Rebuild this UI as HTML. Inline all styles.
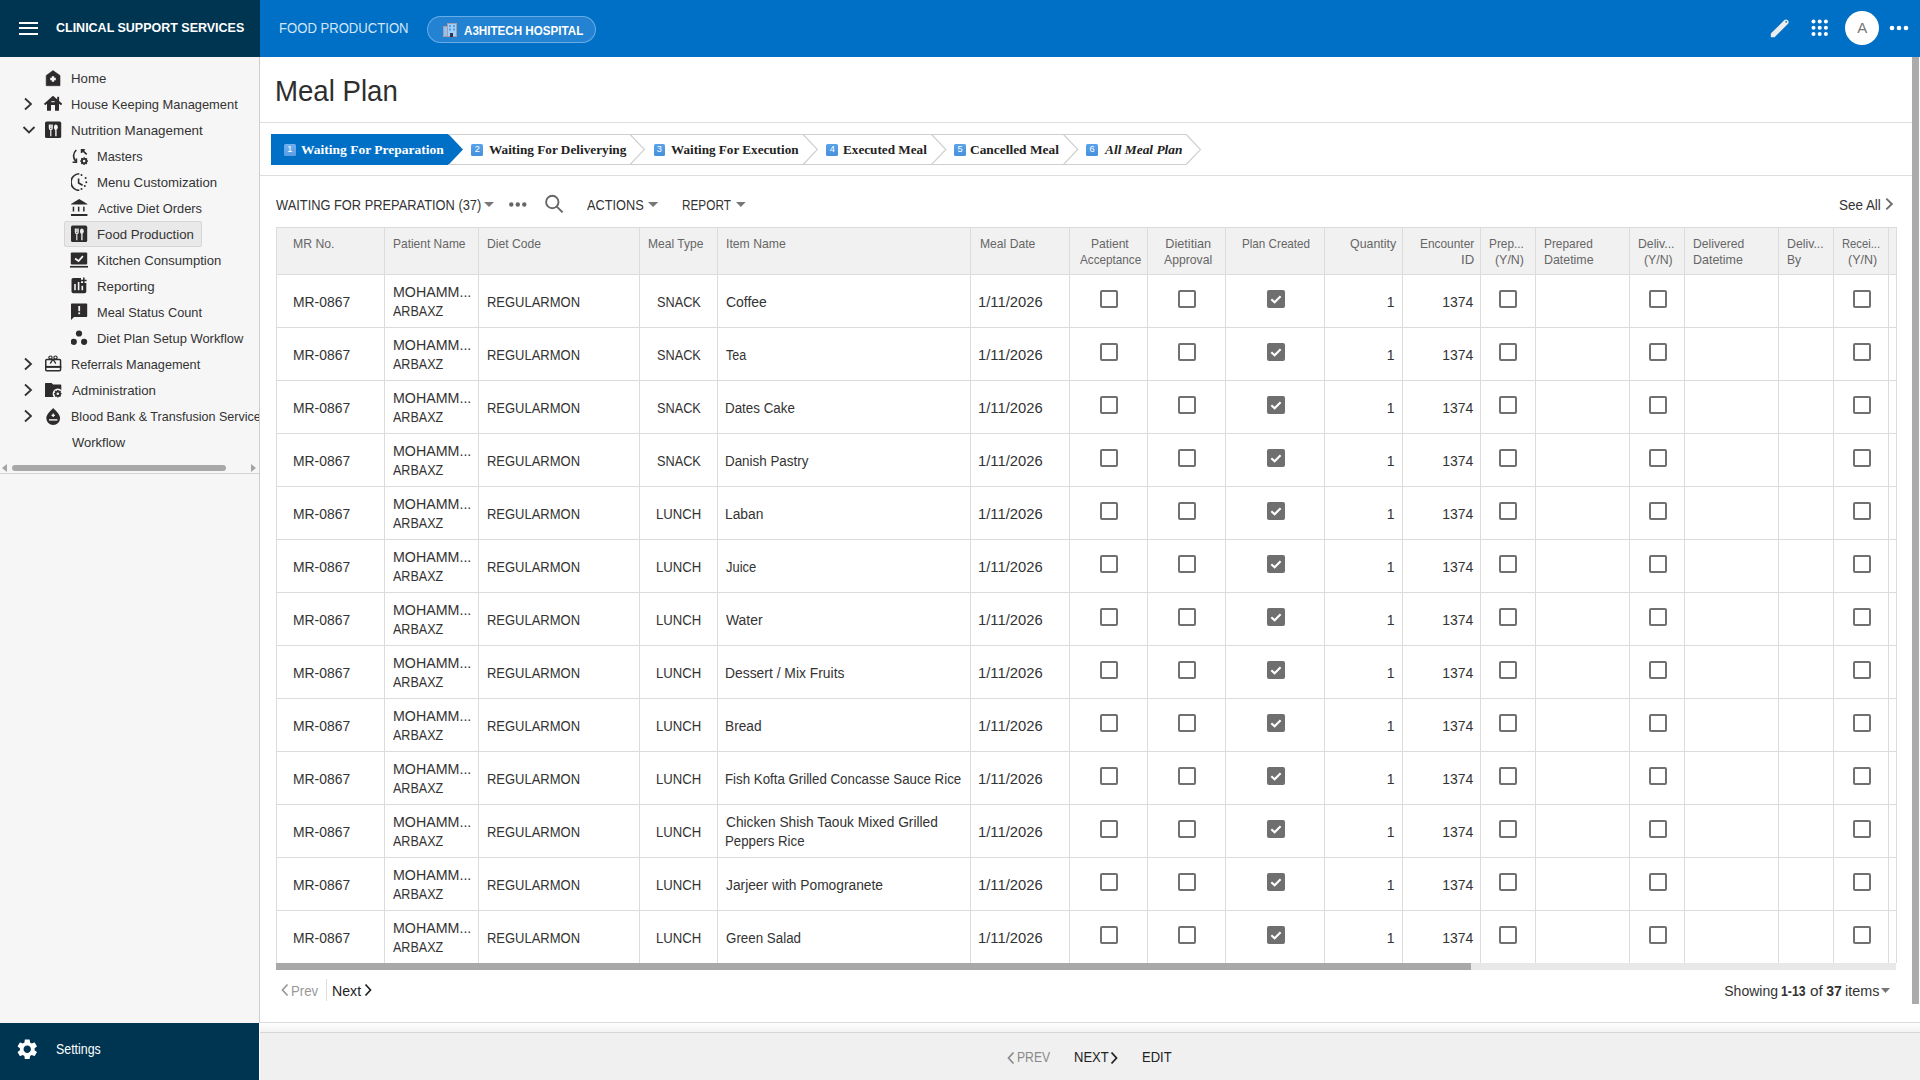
<!DOCTYPE html><html><head><meta charset="utf-8"><style>
*{margin:0;padding:0;box-sizing:border-box}
html,body{width:1920px;height:1080px;overflow:hidden;background:#fff;font-family:"Liberation Sans", sans-serif}
.t{position:absolute;white-space:nowrap}
.a{position:absolute}
</style></head><body>
<div class="a" style="left:0;top:0;width:260px;height:57px;background:#003552"></div><div class="a" style="left:260px;top:0;width:1660px;height:57px;background:#0070c6"></div><div class="a" style="left:19px;top:21.5px;width:19px;height:2px;background:#fff"></div><div class="a" style="left:19px;top:27px;width:19px;height:2px;background:#fff"></div><div class="a" style="left:19px;top:32.5px;width:19px;height:2px;background:#fff"></div><div class="t" style="left:55.80px;top:21.16px;font-size:13.4px;line-height:13.4px;color:#fff;font-weight:bold;font-style:normal;font-family:'Liberation Sans', sans-serif;transform:scaleX(0.9323);transform-origin:0 0;">CLINICAL SUPPORT SERVICES</div><div class="t" style="left:278.65px;top:20.78px;font-size:14.2px;line-height:14.2px;color:#d4e5f6;font-weight:normal;font-style:normal;font-family:'Liberation Sans', sans-serif;transform:scaleX(0.9233);transform-origin:0 0;">FOOD PRODUCTION</div><div class="a" style="left:427px;top:16px;width:169px;height:27px;border-radius:14px;background:#2383d2;border:1px solid rgba(160,205,245,0.55)"></div><svg class="a" style="left:443px;top:23px" width="14" height="14" viewBox="0 0 14 14">
<rect x="0" y="3" width="5" height="11" fill="#a99aa5"/><rect x="1" y="4" width="3" height="9" fill="#8ec2f2"/>
<rect x="4" y="0" width="10" height="14" fill="#a99aa5"/><rect x="5" y="1" width="8" height="12" fill="#9fd0fa"/>
<rect x="6" y="2" width="2" height="2" fill="#5a9ee0"/><rect x="10" y="2" width="2" height="2" fill="#5a9ee0"/>
<rect x="6" y="5.5" width="2" height="2" fill="#5a9ee0"/><rect x="10" y="5.5" width="2" height="2" fill="#5a9ee0"/>
<rect x="7" y="10" width="3" height="4" fill="#3a3045"/></svg><div class="t" style="left:463.61px;top:25.13px;font-size:12.6px;line-height:12.6px;color:#fff;font-weight:bold;font-style:normal;font-family:'Liberation Sans', sans-serif;transform:scaleX(0.9231);transform-origin:0 0;">A3HITECH HOSPITAL</div><svg class="a" style="left:1770px;top:18px" width="20" height="20" viewBox="0 0 20 20">
<path d="M0.8 19.2 L0.8 15.6 L14.4 2.0 A2.65 2.65 0 0 1 18.1 5.7 L4.6 19.2 Z" fill="#ececec"/>
<circle cx="16.2" cy="3.8" r="0.9" fill="#0070c6"/></svg><svg class="a" style="left:1811px;top:19px" width="20" height="20" viewBox="0 0 20 20"><circle cx="2.5" cy="2.5" r="2" fill="#fff"/><circle cx="2.5" cy="8.7" r="2" fill="#fff"/><circle cx="2.5" cy="14.9" r="2" fill="#fff"/><circle cx="8.7" cy="2.5" r="2" fill="#fff"/><circle cx="8.7" cy="8.7" r="2" fill="#fff"/><circle cx="8.7" cy="14.9" r="2" fill="#fff"/><circle cx="14.9" cy="2.5" r="2" fill="#fff"/><circle cx="14.9" cy="8.7" r="2" fill="#fff"/><circle cx="14.9" cy="14.9" r="2" fill="#fff"/></svg><div class="a" style="left:1845px;top:11px;width:34px;height:34px;border-radius:50%;background:#fff"></div><div class="t" style="left:1857.21px;top:20.00px;font-size:15px;line-height:15px;color:#777;font-weight:normal;font-style:normal;font-family:'Liberation Sans', sans-serif;">A</div><svg class="a" style="left:1889px;top:24px" width="20" height="8" viewBox="0 0 20 8"><circle cx="3" cy="4" r="2.3" fill="#fff"/><circle cx="10" cy="4" r="2.3" fill="#fff"/><circle cx="17" cy="4" r="2.3" fill="#fff"/></svg><div class="a" style="left:0;top:57px;width:259px;height:966px;background:#f6f6f6;overflow:hidden"><div class="a" style="left:64px;top:164px;width:138px;height:26px;background:#e9e9e9;border:1px solid #d6d6d6;border-radius:2px"></div><div class="t" style="left:70.84px;top:14.97px;font-size:13.5px;line-height:13.5px;color:#333;font-weight:normal;font-style:normal;font-family:'Liberation Sans', sans-serif;transform:scaleX(0.9799);transform-origin:0 0;">Home</div><div class="t" style="left:70.87px;top:40.97px;font-size:13.5px;line-height:13.5px;color:#333;font-weight:normal;font-style:normal;font-family:'Liberation Sans', sans-serif;transform:scaleX(0.9535);transform-origin:0 0;">House Keeping Management</div><svg class="a" style="left:22.3px;top:40px" width="12" height="14" viewBox="0 0 12 14"><path d="M3 1.5 L9 7 L3 12.5" stroke="#333" stroke-width="1.8" fill="none"/></svg><div class="t" style="left:70.83px;top:66.97px;font-size:13.5px;line-height:13.5px;color:#333;font-weight:normal;font-style:normal;font-family:'Liberation Sans', sans-serif;transform:scaleX(0.9922);transform-origin:0 0;">Nutrition Management</div><svg class="a" style="left:22px;top:67px" width="14" height="12" viewBox="0 0 14 12"><path d="M1.5 3 L7 8.5 L12.5 3" stroke="#333" stroke-width="1.8" fill="none"/></svg><div class="t" style="left:96.57px;top:92.97px;font-size:13.5px;line-height:13.5px;color:#333;font-weight:normal;font-style:normal;font-family:'Liberation Sans', sans-serif;transform:scaleX(0.9496);transform-origin:0 0;">Masters</div><div class="t" style="left:96.55px;top:118.97px;font-size:13.5px;line-height:13.5px;color:#333;font-weight:normal;font-style:normal;font-family:'Liberation Sans', sans-serif;transform:scaleX(0.9761);transform-origin:0 0;">Menu Customization</div><div class="t" style="left:97.60px;top:144.97px;font-size:13.5px;line-height:13.5px;color:#333;font-weight:normal;font-style:normal;font-family:'Liberation Sans', sans-serif;transform:scaleX(0.9498);transform-origin:0 0;">Active Diet Orders</div><div class="t" style="left:96.54px;top:170.97px;font-size:13.5px;line-height:13.5px;color:#333;font-weight:normal;font-style:normal;font-family:'Liberation Sans', sans-serif;transform:scaleX(0.9777);transform-origin:0 0;">Food Production</div><div class="t" style="left:96.55px;top:196.97px;font-size:13.5px;line-height:13.5px;color:#333;font-weight:normal;font-style:normal;font-family:'Liberation Sans', sans-serif;transform:scaleX(0.9687);transform-origin:0 0;">Kitchen Consumption</div><div class="t" style="left:96.54px;top:222.97px;font-size:13.5px;line-height:13.5px;color:#333;font-weight:normal;font-style:normal;font-family:'Liberation Sans', sans-serif;transform:scaleX(0.9838);transform-origin:0 0;">Reporting</div><div class="t" style="left:96.58px;top:248.97px;font-size:13.5px;line-height:13.5px;color:#333;font-weight:normal;font-style:normal;font-family:'Liberation Sans', sans-serif;transform:scaleX(0.9455);transform-origin:0 0;">Meal Status Count</div><div class="t" style="left:96.57px;top:274.97px;font-size:13.5px;line-height:13.5px;color:#333;font-weight:normal;font-style:normal;font-family:'Liberation Sans', sans-serif;transform:scaleX(0.9578);transform-origin:0 0;">Diet Plan Setup Workflow</div><div class="t" style="left:70.88px;top:300.97px;font-size:13.5px;line-height:13.5px;color:#333;font-weight:normal;font-style:normal;font-family:'Liberation Sans', sans-serif;transform:scaleX(0.9409);transform-origin:0 0;">Referrals Management</div><svg class="a" style="left:22.3px;top:300px" width="12" height="14" viewBox="0 0 12 14"><path d="M3 1.5 L9 7 L3 12.5" stroke="#333" stroke-width="1.8" fill="none"/></svg><div class="t" style="left:71.90px;top:326.97px;font-size:13.5px;line-height:13.5px;color:#333;font-weight:normal;font-style:normal;font-family:'Liberation Sans', sans-serif;transform:scaleX(0.9817);transform-origin:0 0;">Administration</div><svg class="a" style="left:22.3px;top:326px" width="12" height="14" viewBox="0 0 12 14"><path d="M3 1.5 L9 7 L3 12.5" stroke="#333" stroke-width="1.8" fill="none"/></svg><div class="t" style="left:70.82px;top:352.97px;font-size:13.5px;line-height:13.5px;color:#333;font-weight:normal;font-style:normal;font-family:'Liberation Sans', sans-serif;transform:scaleX(0.93);transform-origin:0 0;">Blood Bank &amp; Transfusion Services</div><svg class="a" style="left:22.3px;top:352px" width="12" height="14" viewBox="0 0 12 14"><path d="M3 1.5 L9 7 L3 12.5" stroke="#333" stroke-width="1.8" fill="none"/></svg><div class="t" style="left:71.84px;top:378.97px;font-size:13.5px;line-height:13.5px;color:#333;font-weight:normal;font-style:normal;font-family:'Liberation Sans', sans-serif;transform:scaleX(0.9617);transform-origin:0 0;">Workflow</div><svg class="a" style="left:45px;top:12px" width="18" height="18" viewBox="0 0 18 18"><path d="M1.2 6.5 L8 1.6 L15 6.5 L15 16.7 L1.2 16.7 Z" fill="#2d2b2c" stroke="#2d2b2c" stroke-width="0.6" stroke-linejoin="round"/><path d="M8 7.2 V12.8 M5.2 10 H10.8" stroke="#f6f6f6" stroke-width="2.4"/></svg><svg class="a" style="left:44px;top:38px" width="18" height="18" viewBox="0 0 18 18"><path d="M0.6 9.6 L9 2 L17.6 9.6" stroke="#2d2b2c" stroke-width="2" fill="none"/><path d="M3 8 L9 2.8 L15 8 V15.7 H11 V10 H7 V15.7 H3 Z" fill="#2d2b2c"/><rect x="13.2" y="1.8" width="1.9" height="4.6" fill="#2d2b2c"/><rect x="7.3" y="6.2" width="3.3" height="1" fill="#f6f6f6"/></svg><svg class="a" style="left:45px;top:64px" width="18" height="18" viewBox="0 0 18 18"><rect x="0" y="0.6" width="16.2" height="16.5" rx="1.6" fill="#2d2b2c"/><path d="M4.4 3.6 V7 Q4.4 8.6 5.8 8.6 Q7.2 8.6 7.2 7 V3.6 M5.8 3.6 V7.2 M5.8 8.4 V15.2" stroke="#f6f6f6" stroke-width="1.2" fill="none"/><ellipse cx="10.9" cy="6.3" rx="1.9" ry="2.8" fill="#f6f6f6"/><path d="M10.9 8.5 V15.2" stroke="#f6f6f6" stroke-width="1.4"/></svg><svg class="a" style="left:71px;top:90px" width="18" height="18" viewBox="0 0 18 18"><path d="M5.3 3 Q0.2 7.8 4.6 14.4" stroke="#2d2b2c" stroke-width="1.6" fill="none"/><path d="M1.6 15.2 H5.4 V11.4" stroke="#2d2b2c" stroke-width="1.6" fill="none"/><path d="M10.6 2.7 L15.7 7.4 M10.6 6 V2.7 H13.9" stroke="#2d2b2c" stroke-width="1.6" fill="none"/><polygon points="13.10,10.40 14.12,11.64 15.72,11.48 15.56,13.08 16.80,14.10 15.56,15.12 15.72,16.72 14.12,16.56 13.10,17.80 12.08,16.56 10.48,16.72 10.64,15.12 9.40,14.10 10.64,13.08 10.48,11.48 12.08,11.64" fill="#2d2b2c" stroke="#2d2b2c" stroke-width="1" stroke-linejoin="round"/><circle cx="13.1" cy="14.1" r="1.3" fill="#f6f6f6"/></svg><svg class="a" style="left:71px;top:116px" width="18" height="18" viewBox="0 0 18 18"><path d="M8.3 0.8 A8.3 8.3 0 0 0 8.3 17.4" stroke="#2d2b2c" stroke-width="1.6" fill="none"/><path d="M7.6 5.4 V10 L11.6 12.2" stroke="#2d2b2c" stroke-width="1.6" fill="none"/><circle cx="10.5" cy="1.9" r="1" fill="#2d2b2c"/><circle cx="14.6" cy="5.1" r="1" fill="#2d2b2c"/><circle cx="15.3" cy="9.2" r="1" fill="#2d2b2c"/><circle cx="13.8" cy="12.9" r="1" fill="#2d2b2c"/><circle cx="10.5" cy="15.9" r="1" fill="#2d2b2c"/></svg><svg class="a" style="left:71px;top:142px" width="18" height="18" viewBox="0 0 18 18"><path d="M0 5 L8.2 0 L16.4 5 V5.6 H0 Z" fill="#2d2b2c"/><rect x="1.7" y="7.7" width="1.5" height="4.8" fill="#2d2b2c"/><rect x="6.9" y="7.7" width="1.5" height="4.8" fill="#2d2b2c"/><rect x="12.1" y="7.7" width="1.5" height="4.8" fill="#2d2b2c"/><rect x="0" y="15" width="16.4" height="2" fill="#2d2b2c"/></svg><svg class="a" style="left:71px;top:168px" width="18" height="18" viewBox="0 0 18 18"><rect x="0" y="0.6" width="16.2" height="16.5" rx="1.6" fill="#2d2b2c"/><path d="M4.4 3.6 V7 Q4.4 8.6 5.8 8.6 Q7.2 8.6 7.2 7 V3.6 M5.8 3.6 V7.2 M5.8 8.4 V15.2" stroke="#e9e9e9" stroke-width="1.2" fill="none"/><ellipse cx="10.9" cy="6.3" rx="1.9" ry="2.8" fill="#e9e9e9"/><path d="M10.9 8.5 V15.2" stroke="#e9e9e9" stroke-width="1.4"/></svg><svg class="a" style="left:70px;top:194px" width="18" height="18" viewBox="0 0 18 18"><rect x="0.8" y="1.6" width="16.4" height="11.9" rx="1" fill="#2d2b2c"/><path d="M5.1 7.6 L8.5 10 L12.9 5.2" stroke="#f6f6f6" stroke-width="1.8" fill="none"/><rect x="0" y="14.9" width="18" height="1.7" fill="#2d2b2c"/></svg><svg class="a" style="left:71px;top:220px" width="18" height="18" viewBox="0 0 18 18"><rect x="0.5" y="1" width="14.8" height="15.2" rx="1.8" fill="#2d2b2c"/><rect x="10" y="0" width="8" height="6" fill="#f6f6f6"/><path d="M12.8 0.6 V6.2 M10 3.4 H15.6" stroke="#2d2b2c" stroke-width="1.5"/><rect x="3.2" y="7" width="1.6" height="6.2" fill="#f6f6f6"/><rect x="6.8" y="5" width="1.6" height="8.2" fill="#f6f6f6"/><rect x="10.5" y="8.8" width="1.6" height="4.4" fill="#f6f6f6"/></svg><svg class="a" style="left:71px;top:246px" width="18" height="18" viewBox="0 0 18 18"><path d="M0 1.2 Q0 0.4 0.8 0.4 H15.4 Q16.2 0.4 16.2 1.2 V13.2 Q16.2 14 15.4 14 H3 L0 16.9 Z" fill="#2d2b2c"/><rect x="7.3" y="3" width="1.8" height="5.2" fill="#f6f6f6"/><rect x="7.3" y="9.4" width="1.8" height="1.8" fill="#f6f6f6"/></svg><svg class="a" style="left:71px;top:272px" width="18" height="18" viewBox="0 0 18 18"><circle cx="8" cy="4.5" r="3.1" fill="#2d2b2c"/><circle cx="2.8" cy="12.8" r="3.1" fill="#2d2b2c"/><circle cx="13.1" cy="12.8" r="3.1" fill="#2d2b2c"/></svg><svg class="a" style="left:45px;top:298px" width="18" height="18" viewBox="0 0 18 18"><rect x="0.75" y="4.6" width="14.8" height="11.2" rx="1" fill="none" stroke="#2d2b2c" stroke-width="1.5"/><rect x="0" y="10.9" width="16.3" height="2" fill="#2d2b2c"/><circle cx="5.5" cy="2.6" r="1.6" fill="none" stroke="#2d2b2c" stroke-width="1.2"/><circle cx="10.5" cy="2.6" r="1.6" fill="none" stroke="#2d2b2c" stroke-width="1.2"/><path d="M8 4.2 L5.2 8.6 M8 4.2 L10.8 8.6" stroke="#2d2b2c" stroke-width="1.3"/></svg><svg class="a" style="left:45px;top:324px" width="18" height="18" viewBox="0 0 18 18"><path d="M0 2.6 Q0 2 0.6 2 H6.6 L8.1 3.5 H15.6 Q16.3 3.5 16.3 4.2 V15.9 H0 Z" fill="#2d2b2c"/><circle cx="12.8" cy="12.7" r="5.2" fill="#f6f6f6"/><polygon points="12.80,9.10 13.79,10.31 15.35,10.15 15.19,11.71 16.40,12.70 15.19,13.69 15.35,15.25 13.79,15.09 12.80,16.30 11.81,15.09 10.25,15.25 10.41,13.69 9.20,12.70 10.41,11.71 10.25,10.15 11.81,10.31" fill="#2d2b2c" stroke="#2d2b2c" stroke-width="1" stroke-linejoin="round"/><circle cx="12.8" cy="12.7" r="1.3" fill="#f6f6f6"/></svg><svg class="a" style="left:45px;top:350px" width="18" height="18" viewBox="0 0 18 18"><path d="M8.2 1 C5.5 4 1.3 7.5 1.3 11 A6.9 6.9 0 0 0 15.1 11 C15.1 7.5 10.9 4 8.2 1 Z" fill="#2d2b2c"/><path d="M8.2 6.6 V10 M6.5 8.3 H9.9" stroke="#f6f6f6" stroke-width="1.3"/><rect x="4" y="12.2" width="8.4" height="1.4" fill="#f6f6f6"/></svg><svg class="a" style="left:2px;top:407px" width="6" height="8" viewBox="0 0 6 8"><path d="M5 0 L0 4 L5 8 Z" fill="#a3a3a3"/></svg><div class="a" style="left:12px;top:408px;width:214px;height:6px;border-radius:3px;background:#a8a8a8"></div><svg class="a" style="left:251px;top:407px" width="6" height="8" viewBox="0 0 6 8"><path d="M0 0 L5 4 L0 8 Z" fill="#a3a3a3"/></svg><div class="a" style="left:0;top:416px;width:259px;height:1px;background:#d4d4d4"></div></div><div class="a" style="left:259px;top:57px;width:1px;height:966px;background:#cdcdcd"></div><div class="a" style="left:0;top:1023px;width:259px;height:57px;background:#003552"></div><svg class="a" style="left:17.3px;top:1038.8px" width="20.5" height="20.5" viewBox="2 2 20 20"><path fill="#fff" d="M19.14 12.94c.04-.3.06-.61.06-.94 0-.32-.02-.64-.07-.94l2.03-1.58a.49.49 0 0 0 .12-.61l-1.92-3.32a.488.488 0 0 0-.59-.22l-2.39.96c-.5-.38-1.030-.7-1.62-.94l-.36-2.54a.484.484 0 0 0-.48-.41h-3.84c-.24 0-.43.17-.47.41l-.36 2.540c-.59.24-1.13.57-1.62.94l-2.39-.96c-.22-.08-.47 0-.59.22L2.74 8.87c-.12.21-.08.47.12.61l2.03 1.58c-.05.3-.09.63-.09.94s.02.64.07.94l-2.03 1.58a.49.49 0 0 0-.12.61l1.92 3.32c.12.22.37.29.59.22l2.39-.96c.5.38 1.03.7 1.62.94l.36 2.54c.05.24.24.41.48.41h3.840c.24 0 .44-.17.47-.41l.36-2.54c.59-.24 1.13-.56 1.62-.94l2.39.96c.22.08.47 0 .59-.22l1.92-3.32c.12-.22.07-.47-.12-.61l-2.01-1.58zM12 15.6c-1.98 0-3.6-1.62-3.6-3.6s1.62-3.6 3.6-3.6 3.6 1.62 3.6 3.6-1.62 3.6-3.6 3.6z"/></svg><div class="t" style="left:55.69px;top:1042.82px;font-size:13.8px;line-height:13.8px;color:#fff;font-weight:normal;font-style:normal;font-family:'Liberation Sans', sans-serif;transform:scaleX(0.8968);transform-origin:0 0;">Settings</div><div class="t" style="left:275.29px;top:76.54px;font-size:28.6px;line-height:28.6px;color:#2e2e2e;font-weight:normal;font-style:normal;font-family:'Liberation Sans', sans-serif;transform:scaleX(0.9660);transform-origin:0 0;">Meal Plan</div><div class="a" style="left:260px;top:122px;width:1652px;height:1px;background:#dedede"></div><svg class="a" style="left:260px;top:134px" width="960" height="31" viewBox="260 134 960 31"><path d="M271 134 H448.3 L463 149.5 L448.3 165 H271 Z" fill="#0070c6"/><path d="M448.3 134.5 H1186.2 M448.3 164.5 H1186.2" stroke="#cfcfcf" stroke-width="1"/><path d="M630.1 134.5 L644.4 149.5 L630.1 164.5" stroke="#cfcfcf" stroke-width="1.1" fill="none"/><path d="M803.1 134.5 L817.4 149.5 L803.1 164.5" stroke="#cfcfcf" stroke-width="1.1" fill="none"/><path d="M931.6 134.5 L945.9 149.5 L931.6 164.5" stroke="#cfcfcf" stroke-width="1.1" fill="none"/><path d="M1063.5 134.5 L1077.8 149.5 L1063.5 164.5" stroke="#cfcfcf" stroke-width="1.1" fill="none"/><path d="M1186.2 134.5 L1200.5 149.5 L1186.2 164.5" stroke="#cfcfcf" stroke-width="1.1" fill="none"/></svg><div class="a" style="left:284.05px;top:144px;width:11.7px;height:11.6px;border-radius:1.5px;background:linear-gradient(#6fb0ee,#5a9de2)"></div><div class="t" style="left:287.26px;top:145.21px;font-size:9.2px;line-height:9.2px;color:#fff;font-weight:normal;font-style:normal;font-family:'Liberation Sans', sans-serif;">1</div><div class="t" style="left:301.05px;top:143.90px;font-size:12.3px;line-height:12.3px;color:#fff;font-weight:bold;font-style:normal;font-family:'Liberation Serif', serif;transform:scaleX(1.0987);transform-origin:0 0;">Waiting For Preparation</div><div class="a" style="left:471.3px;top:144px;width:11.7px;height:11.6px;border-radius:1.5px;background:linear-gradient(#5aa3ea,#4690dc)"></div><div class="t" style="left:474.65px;top:145.21px;font-size:9.2px;line-height:9.2px;color:#fff;font-weight:normal;font-style:normal;font-family:'Liberation Sans', sans-serif;">2</div><div class="t" style="left:489.05px;top:143.90px;font-size:12.3px;line-height:12.3px;color:#222;font-weight:bold;font-style:normal;font-family:'Liberation Serif', serif;transform:scaleX(1.0767);transform-origin:0 0;">Waiting For Deliverying</div><div class="a" style="left:653.5px;top:144px;width:11.7px;height:11.6px;border-radius:1.5px;background:linear-gradient(#5aa3ea,#4690dc)"></div><div class="t" style="left:656.85px;top:145.21px;font-size:9.2px;line-height:9.2px;color:#fff;font-weight:normal;font-style:normal;font-family:'Liberation Sans', sans-serif;">3</div><div class="t" style="left:671.40px;top:143.90px;font-size:12.3px;line-height:12.3px;color:#222;font-weight:bold;font-style:normal;font-family:'Liberation Serif', serif;transform:scaleX(1.0685);transform-origin:0 0;">Waiting For Execution</div><div class="a" style="left:826.3px;top:144px;width:11.7px;height:11.6px;border-radius:1.5px;background:linear-gradient(#5aa3ea,#4690dc)"></div><div class="t" style="left:829.69px;top:145.21px;font-size:9.2px;line-height:9.2px;color:#fff;font-weight:normal;font-style:normal;font-family:'Liberation Sans', sans-serif;">4</div><div class="t" style="left:842.80px;top:143.90px;font-size:12.3px;line-height:12.3px;color:#222;font-weight:bold;font-style:normal;font-family:'Liberation Serif', serif;transform:scaleX(1.0720);transform-origin:0 0;">Executed Meal</div><div class="a" style="left:954.0999999999999px;top:144px;width:11.7px;height:11.6px;border-radius:1.5px;background:linear-gradient(#5aa3ea,#4690dc)"></div><div class="t" style="left:957.45px;top:145.21px;font-size:9.2px;line-height:9.2px;color:#fff;font-weight:normal;font-style:normal;font-family:'Liberation Sans', sans-serif;">5</div><div class="t" style="left:970.23px;top:143.90px;font-size:12.3px;line-height:12.3px;color:#222;font-weight:bold;font-style:normal;font-family:'Liberation Serif', serif;transform:scaleX(1.0890);transform-origin:0 0;">Cancelled Meal</div><div class="a" style="left:1086.3px;top:144px;width:11.7px;height:11.6px;border-radius:1.5px;background:linear-gradient(#5aa3ea,#4690dc)"></div><div class="t" style="left:1089.60px;top:145.21px;font-size:9.2px;line-height:9.2px;color:#fff;font-weight:normal;font-style:normal;font-family:'Liberation Sans', sans-serif;">6</div><div class="t" style="left:1104.77px;top:143.90px;font-size:12.3px;line-height:12.3px;color:#222;font-weight:bold;font-style:italic;font-family:'Liberation Serif', serif;transform:scaleX(1.0910);transform-origin:0 0;">All Meal Plan</div><div class="a" style="left:260px;top:175px;width:1652px;height:1px;background:#dedede"></div><div class="t" style="left:275.54px;top:197.75px;font-size:14px;line-height:14px;color:#333;font-weight:normal;font-style:normal;font-family:'Liberation Sans', sans-serif;transform:scaleX(0.9174);transform-origin:0 0;">WAITING FOR PREPARATION (37)</div><svg class="a" style="left:484.4px;top:202px" width="10.0" height="5" viewBox="0 0 10 5" preserveAspectRatio="none"><path d="M0 0 H10 L5 5 Z" fill="#777"/></svg><svg class="a" style="left:509px;top:202px" width="18" height="5" viewBox="0 0 18 5"><circle cx="2.3" cy="2.5" r="2.2" fill="#666"/><circle cx="8.8" cy="2.5" r="2.2" fill="#666"/><circle cx="15.3" cy="2.5" r="2.2" fill="#666"/></svg><svg class="a" style="left:544px;top:194px" width="20" height="20" viewBox="0 0 20 20"><circle cx="8.3" cy="8" r="6.2" fill="none" stroke="#666" stroke-width="1.9"/><path d="M12.8 12.6 L18.6 18.4" stroke="#666" stroke-width="2"/></svg><div class="t" style="left:587.20px;top:197.95px;font-size:14px;line-height:14px;color:#333;font-weight:normal;font-style:normal;font-family:'Liberation Sans', sans-serif;transform:scaleX(0.9107);transform-origin:0 0;">ACTIONS</div><svg class="a" style="left:647.7px;top:202px" width="10.199999999999932" height="5" viewBox="0 0 10 5" preserveAspectRatio="none"><path d="M0 0 H10 L5 5 Z" fill="#777"/></svg><div class="t" style="left:682.46px;top:197.95px;font-size:14px;line-height:14px;color:#333;font-weight:normal;font-style:normal;font-family:'Liberation Sans', sans-serif;transform:scaleX(0.8413);transform-origin:0 0;">REPORT</div><svg class="a" style="left:736px;top:202px" width="9.700000000000045" height="5" viewBox="0 0 10 5" preserveAspectRatio="none"><path d="M0 0 H10 L5 5 Z" fill="#777"/></svg><div class="t" style="left:1839.10px;top:197.55px;font-size:14px;line-height:14px;color:#333;font-weight:normal;font-style:normal;font-family:'Liberation Sans', sans-serif;transform:scaleX(0.9595);transform-origin:0 0;">See All</div><svg class="a" style="left:1883.5px;top:197px" width="10" height="14" viewBox="0 0 10 14"><path d="M2.3 1.6 L7.8 7 L2.3 12.4" stroke="#707070" stroke-width="2" fill="none"/></svg><div class="a" style="left:276px;top:227px;width:1620px;height:47px;background:#f1f1f1"></div><div class="a" style="left:276px;top:227px;width:1620px;height:1px;background:#dcdcdc"></div><div class="a" style="left:276px;top:274px;width:1620px;height:1px;background:#dcdcdc"></div><div class="a" style="left:276px;top:327px;width:1620px;height:1px;background:#dcdcdc"></div><div class="a" style="left:276px;top:380px;width:1620px;height:1px;background:#dcdcdc"></div><div class="a" style="left:276px;top:433px;width:1620px;height:1px;background:#dcdcdc"></div><div class="a" style="left:276px;top:486px;width:1620px;height:1px;background:#dcdcdc"></div><div class="a" style="left:276px;top:539px;width:1620px;height:1px;background:#dcdcdc"></div><div class="a" style="left:276px;top:592px;width:1620px;height:1px;background:#dcdcdc"></div><div class="a" style="left:276px;top:645px;width:1620px;height:1px;background:#dcdcdc"></div><div class="a" style="left:276px;top:698px;width:1620px;height:1px;background:#dcdcdc"></div><div class="a" style="left:276px;top:751px;width:1620px;height:1px;background:#dcdcdc"></div><div class="a" style="left:276px;top:804px;width:1620px;height:1px;background:#dcdcdc"></div><div class="a" style="left:276px;top:857px;width:1620px;height:1px;background:#dcdcdc"></div><div class="a" style="left:276px;top:910px;width:1620px;height:1px;background:#dcdcdc"></div><div class="a" style="left:276px;top:227px;width:1px;height:736px;background:#dcdcdc"></div><div class="a" style="left:384px;top:227px;width:1px;height:736px;background:#dcdcdc"></div><div class="a" style="left:478px;top:227px;width:1px;height:736px;background:#dcdcdc"></div><div class="a" style="left:639px;top:227px;width:1px;height:736px;background:#dcdcdc"></div><div class="a" style="left:717px;top:227px;width:1px;height:736px;background:#dcdcdc"></div><div class="a" style="left:970px;top:227px;width:1px;height:736px;background:#dcdcdc"></div><div class="a" style="left:1069px;top:227px;width:1px;height:736px;background:#dcdcdc"></div><div class="a" style="left:1147px;top:227px;width:1px;height:736px;background:#dcdcdc"></div><div class="a" style="left:1225px;top:227px;width:1px;height:736px;background:#dcdcdc"></div><div class="a" style="left:1324px;top:227px;width:1px;height:736px;background:#dcdcdc"></div><div class="a" style="left:1402px;top:227px;width:1px;height:736px;background:#dcdcdc"></div><div class="a" style="left:1480px;top:227px;width:1px;height:736px;background:#dcdcdc"></div><div class="a" style="left:1535px;top:227px;width:1px;height:736px;background:#dcdcdc"></div><div class="a" style="left:1629px;top:227px;width:1px;height:736px;background:#dcdcdc"></div><div class="a" style="left:1684px;top:227px;width:1px;height:736px;background:#dcdcdc"></div><div class="a" style="left:1778px;top:227px;width:1px;height:736px;background:#dcdcdc"></div><div class="a" style="left:1833px;top:227px;width:1px;height:736px;background:#dcdcdc"></div><div class="a" style="left:1888px;top:227px;width:1px;height:736px;background:#dcdcdc"></div><div class="a" style="left:1896px;top:227px;width:1px;height:736px;background:#dcdcdc"></div><div class="t" style="left:293.22px;top:238.45px;font-size:12.7px;line-height:12.7px;color:#666;font-weight:normal;font-style:normal;font-family:'Liberation Sans', sans-serif;transform:scaleX(0.9625);transform-origin:0 0;">MR No.</div><div class="t" style="left:393.24px;top:238.45px;font-size:12.7px;line-height:12.7px;color:#666;font-weight:normal;font-style:normal;font-family:'Liberation Sans', sans-serif;transform:scaleX(0.9433);transform-origin:0 0;">Patient Name</div><div class="t" style="left:486.93px;top:238.45px;font-size:12.7px;line-height:12.7px;color:#666;font-weight:normal;font-style:normal;font-family:'Liberation Sans', sans-serif;transform:scaleX(0.9569);transform-origin:0 0;">Diet Code</div><div class="t" style="left:648.14px;top:238.45px;font-size:12.7px;line-height:12.7px;color:#666;font-weight:normal;font-style:normal;font-family:'Liberation Sans', sans-serif;transform:scaleX(0.9495);transform-origin:0 0;">Meal Type</div><div class="t" style="left:726.10px;top:238.45px;font-size:12.7px;line-height:12.7px;color:#666;font-weight:normal;font-style:normal;font-family:'Liberation Sans', sans-serif;transform:scaleX(0.9621);transform-origin:0 0;">Item Name</div><div class="t" style="left:979.73px;top:238.45px;font-size:12.7px;line-height:12.7px;color:#666;font-weight:normal;font-style:normal;font-family:'Liberation Sans', sans-serif;transform:scaleX(0.9563);transform-origin:0 0;">Meal Date</div><div class="t" style="left:1090.83px;top:238.45px;font-size:12.7px;line-height:12.7px;color:#666;font-weight:normal;font-style:normal;font-family:'Liberation Sans', sans-serif;transform:scaleX(0.9553);transform-origin:0 0;">Patient</div><div class="t" style="left:1079.70px;top:254.25px;font-size:12.7px;line-height:12.7px;color:#666;font-weight:normal;font-style:normal;font-family:'Liberation Sans', sans-serif;transform:scaleX(0.9227);transform-origin:0 0;">Acceptance</div><div class="t" style="left:1165.28px;top:238.45px;font-size:12.7px;line-height:12.7px;color:#666;font-weight:normal;font-style:normal;font-family:'Liberation Sans', sans-serif;">Dietitian</div><div class="t" style="left:1164.00px;top:254.25px;font-size:12.7px;line-height:12.7px;color:#666;font-weight:normal;font-style:normal;font-family:'Liberation Sans', sans-serif;transform:scaleX(0.9619);transform-origin:0 0;">Approval</div><div class="t" style="left:1242.17px;top:238.45px;font-size:12.7px;line-height:12.7px;color:#666;font-weight:normal;font-style:normal;font-family:'Liberation Sans', sans-serif;transform:scaleX(0.9189);transform-origin:0 0;">Plan Created</div><div class="t" style="left:1349.74px;top:238.45px;font-size:12.7px;line-height:12.7px;color:#666;font-weight:normal;font-style:normal;font-family:'Liberation Sans', sans-serif;transform:scaleX(0.9757);transform-origin:0 0;">Quantity</div><div class="t" style="left:1419.75px;top:238.45px;font-size:12.7px;line-height:12.7px;color:#666;font-weight:normal;font-style:normal;font-family:'Liberation Sans', sans-serif;transform:scaleX(0.9375);transform-origin:0 0;">Encounter</div><div class="t" style="left:1461.21px;top:254.25px;font-size:12.7px;line-height:12.7px;color:#666;font-weight:normal;font-style:normal;font-family:'Liberation Sans', sans-serif;transform:scaleX(1.0377);transform-origin:0 0;">ID</div><div class="t" style="left:1489.15px;top:238.45px;font-size:12.7px;line-height:12.7px;color:#666;font-weight:normal;font-style:normal;font-family:'Liberation Sans', sans-serif;transform:scaleX(0.9307);transform-origin:0 0;">Prep...</div><div class="t" style="left:1494.76px;top:254.25px;font-size:12.7px;line-height:12.7px;color:#666;font-weight:normal;font-style:normal;font-family:'Liberation Sans', sans-serif;transform:scaleX(0.9762);transform-origin:0 0;">(Y/N)</div><div class="t" style="left:1544.25px;top:238.45px;font-size:12.7px;line-height:12.7px;color:#666;font-weight:normal;font-style:normal;font-family:'Liberation Sans', sans-serif;transform:scaleX(0.9342);transform-origin:0 0;">Prepared</div><div class="t" style="left:1544.21px;top:254.25px;font-size:12.7px;line-height:12.7px;color:#666;font-weight:normal;font-style:normal;font-family:'Liberation Sans', sans-serif;transform:scaleX(0.9754);transform-origin:0 0;">Datetime</div><div class="t" style="left:1638.22px;top:238.45px;font-size:12.7px;line-height:12.7px;color:#666;font-weight:normal;font-style:normal;font-family:'Liberation Sans', sans-serif;transform:scaleX(0.9639);transform-origin:0 0;">Deliv...</div><div class="t" style="left:1644.06px;top:254.25px;font-size:12.7px;line-height:12.7px;color:#666;font-weight:normal;font-style:normal;font-family:'Liberation Sans', sans-serif;transform:scaleX(0.9691);transform-origin:0 0;">(Y/N)</div><div class="t" style="left:1693.03px;top:238.45px;font-size:12.7px;line-height:12.7px;color:#666;font-weight:normal;font-style:normal;font-family:'Liberation Sans', sans-serif;transform:scaleX(0.9553);transform-origin:0 0;">Delivered</div><div class="t" style="left:1693.00px;top:254.25px;font-size:12.7px;line-height:12.7px;color:#666;font-weight:normal;font-style:normal;font-family:'Liberation Sans', sans-serif;transform:scaleX(0.9815);transform-origin:0 0;">Datetime</div><div class="t" style="left:1786.81px;top:238.45px;font-size:12.7px;line-height:12.7px;color:#666;font-weight:normal;font-style:normal;font-family:'Liberation Sans', sans-serif;transform:scaleX(0.9695);transform-origin:0 0;">Deliv...</div><div class="t" style="left:1786.83px;top:254.25px;font-size:12.7px;line-height:12.7px;color:#666;font-weight:normal;font-style:normal;font-family:'Liberation Sans', sans-serif;transform:scaleX(0.9507);transform-origin:0 0;">By</div><div class="t" style="left:1842.20px;top:238.45px;font-size:12.7px;line-height:12.7px;color:#666;font-weight:normal;font-style:normal;font-family:'Liberation Sans', sans-serif;transform:scaleX(0.8841);transform-origin:0 0;">Recei...</div><div class="t" style="left:1847.95px;top:254.25px;font-size:12.7px;line-height:12.7px;color:#666;font-weight:normal;font-style:normal;font-family:'Liberation Sans', sans-serif;transform:scaleX(0.9834);transform-origin:0 0;">(Y/N)</div><div class="t" style="left:292.99px;top:295.15px;font-size:14px;line-height:14px;color:#333;font-weight:normal;font-style:normal;font-family:'Liberation Sans', sans-serif;transform:scaleX(0.9925);transform-origin:0 0;">MR-0867</div><div class="t" style="left:392.66px;top:285.15px;font-size:14px;line-height:14px;color:#333;font-weight:normal;font-style:normal;font-family:'Liberation Sans', sans-serif;transform:scaleX(1.0168);transform-origin:0 0;">MOHAMM...</div><div class="t" style="left:393.20px;top:303.95px;font-size:14px;line-height:14px;color:#333;font-weight:normal;font-style:normal;font-family:'Liberation Sans', sans-serif;transform:scaleX(0.8960);transform-origin:0 0;">ARBAXZ</div><div class="t" style="left:487.36px;top:295.15px;font-size:14px;line-height:14px;color:#333;font-weight:normal;font-style:normal;font-family:'Liberation Sans', sans-serif;transform:scaleX(0.9269);transform-origin:0 0;">REGULARMON</div><div class="t" style="left:656.93px;top:295.15px;font-size:14px;line-height:14px;color:#333;font-weight:normal;font-style:normal;font-family:'Liberation Sans', sans-serif;transform:scaleX(0.9081);transform-origin:0 0;">SNACK</div><div class="t" style="left:725.80px;top:295.15px;font-size:14px;line-height:14px;color:#333;font-weight:normal;font-style:normal;font-family:'Liberation Sans', sans-serif;transform:scaleX(0.9970);transform-origin:0 0;">Coffee</div><div class="t" style="left:978.39px;top:295.15px;font-size:14px;line-height:14px;color:#333;font-weight:normal;font-style:normal;font-family:'Liberation Sans', sans-serif;transform:scaleX(1.0547);transform-origin:0 0;">1/11/2026</div><div class="a" style="left:1100px;top:290px;width:18px;height:18px;border-radius:2px;border:2px solid #707070;background:#fff"></div><div class="a" style="left:1177.5px;top:290px;width:18px;height:18px;border-radius:2px;border:2px solid #707070;background:#fff"></div><div class="a" style="left:1266.8000000000002px;top:290px;width:18px;height:18px;border-radius:2px;background:#6f6f6f"></div><svg class="a" style="left:1266.8000000000002px;top:290px" width="18" height="18" viewBox="0 0 18 18"><path d="M4.3 9.2 L7.6 12.3 L13.6 6.2" stroke="#fff" stroke-width="2.1" fill="none"/></svg><div class="t" style="left:1386.76px;top:295.15px;font-size:14px;line-height:14px;color:#333;font-weight:normal;font-style:normal;font-family:'Liberation Sans', sans-serif;">1</div><div class="t" style="left:1442.27px;top:295.15px;font-size:14px;line-height:14px;color:#333;font-weight:normal;font-style:normal;font-family:'Liberation Sans', sans-serif;">1374</div><div class="a" style="left:1498.8px;top:290px;width:18px;height:18px;border-radius:2px;border:2px solid #707070;background:#fff"></div><div class="a" style="left:1648.5px;top:290px;width:18px;height:18px;border-radius:2px;border:2px solid #707070;background:#fff"></div><div class="a" style="left:1852.5px;top:290px;width:18px;height:18px;border-radius:2px;border:2px solid #707070;background:#fff"></div><div class="t" style="left:292.99px;top:348.15px;font-size:14px;line-height:14px;color:#333;font-weight:normal;font-style:normal;font-family:'Liberation Sans', sans-serif;transform:scaleX(0.9925);transform-origin:0 0;">MR-0867</div><div class="t" style="left:392.66px;top:338.15px;font-size:14px;line-height:14px;color:#333;font-weight:normal;font-style:normal;font-family:'Liberation Sans', sans-serif;transform:scaleX(1.0168);transform-origin:0 0;">MOHAMM...</div><div class="t" style="left:393.20px;top:356.95px;font-size:14px;line-height:14px;color:#333;font-weight:normal;font-style:normal;font-family:'Liberation Sans', sans-serif;transform:scaleX(0.8960);transform-origin:0 0;">ARBAXZ</div><div class="t" style="left:487.36px;top:348.15px;font-size:14px;line-height:14px;color:#333;font-weight:normal;font-style:normal;font-family:'Liberation Sans', sans-serif;transform:scaleX(0.9269);transform-origin:0 0;">REGULARMON</div><div class="t" style="left:656.93px;top:348.15px;font-size:14px;line-height:14px;color:#333;font-weight:normal;font-style:normal;font-family:'Liberation Sans', sans-serif;transform:scaleX(0.9081);transform-origin:0 0;">SNACK</div><div class="t" style="left:726.25px;top:348.15px;font-size:14px;line-height:14px;color:#333;font-weight:normal;font-style:normal;font-family:'Liberation Sans', sans-serif;transform:scaleX(0.8985);transform-origin:0 0;">Tea</div><div class="t" style="left:978.39px;top:348.15px;font-size:14px;line-height:14px;color:#333;font-weight:normal;font-style:normal;font-family:'Liberation Sans', sans-serif;transform:scaleX(1.0547);transform-origin:0 0;">1/11/2026</div><div class="a" style="left:1100px;top:343px;width:18px;height:18px;border-radius:2px;border:2px solid #707070;background:#fff"></div><div class="a" style="left:1177.5px;top:343px;width:18px;height:18px;border-radius:2px;border:2px solid #707070;background:#fff"></div><div class="a" style="left:1266.8000000000002px;top:343px;width:18px;height:18px;border-radius:2px;background:#6f6f6f"></div><svg class="a" style="left:1266.8000000000002px;top:343px" width="18" height="18" viewBox="0 0 18 18"><path d="M4.3 9.2 L7.6 12.3 L13.6 6.2" stroke="#fff" stroke-width="2.1" fill="none"/></svg><div class="t" style="left:1386.76px;top:348.15px;font-size:14px;line-height:14px;color:#333;font-weight:normal;font-style:normal;font-family:'Liberation Sans', sans-serif;">1</div><div class="t" style="left:1442.27px;top:348.15px;font-size:14px;line-height:14px;color:#333;font-weight:normal;font-style:normal;font-family:'Liberation Sans', sans-serif;">1374</div><div class="a" style="left:1498.8px;top:343px;width:18px;height:18px;border-radius:2px;border:2px solid #707070;background:#fff"></div><div class="a" style="left:1648.5px;top:343px;width:18px;height:18px;border-radius:2px;border:2px solid #707070;background:#fff"></div><div class="a" style="left:1852.5px;top:343px;width:18px;height:18px;border-radius:2px;border:2px solid #707070;background:#fff"></div><div class="t" style="left:292.99px;top:401.15px;font-size:14px;line-height:14px;color:#333;font-weight:normal;font-style:normal;font-family:'Liberation Sans', sans-serif;transform:scaleX(0.9925);transform-origin:0 0;">MR-0867</div><div class="t" style="left:392.66px;top:391.15px;font-size:14px;line-height:14px;color:#333;font-weight:normal;font-style:normal;font-family:'Liberation Sans', sans-serif;transform:scaleX(1.0168);transform-origin:0 0;">MOHAMM...</div><div class="t" style="left:393.20px;top:409.95px;font-size:14px;line-height:14px;color:#333;font-weight:normal;font-style:normal;font-family:'Liberation Sans', sans-serif;transform:scaleX(0.8960);transform-origin:0 0;">ARBAXZ</div><div class="t" style="left:487.36px;top:401.15px;font-size:14px;line-height:14px;color:#333;font-weight:normal;font-style:normal;font-family:'Liberation Sans', sans-serif;transform:scaleX(0.9269);transform-origin:0 0;">REGULARMON</div><div class="t" style="left:656.93px;top:401.15px;font-size:14px;line-height:14px;color:#333;font-weight:normal;font-style:normal;font-family:'Liberation Sans', sans-serif;transform:scaleX(0.9081);transform-origin:0 0;">SNACK</div><div class="t" style="left:725.43px;top:401.15px;font-size:14px;line-height:14px;color:#333;font-weight:normal;font-style:normal;font-family:'Liberation Sans', sans-serif;transform:scaleX(0.9552);transform-origin:0 0;">Dates Cake</div><div class="t" style="left:978.39px;top:401.15px;font-size:14px;line-height:14px;color:#333;font-weight:normal;font-style:normal;font-family:'Liberation Sans', sans-serif;transform:scaleX(1.0547);transform-origin:0 0;">1/11/2026</div><div class="a" style="left:1100px;top:396px;width:18px;height:18px;border-radius:2px;border:2px solid #707070;background:#fff"></div><div class="a" style="left:1177.5px;top:396px;width:18px;height:18px;border-radius:2px;border:2px solid #707070;background:#fff"></div><div class="a" style="left:1266.8000000000002px;top:396px;width:18px;height:18px;border-radius:2px;background:#6f6f6f"></div><svg class="a" style="left:1266.8000000000002px;top:396px" width="18" height="18" viewBox="0 0 18 18"><path d="M4.3 9.2 L7.6 12.3 L13.6 6.2" stroke="#fff" stroke-width="2.1" fill="none"/></svg><div class="t" style="left:1386.76px;top:401.15px;font-size:14px;line-height:14px;color:#333;font-weight:normal;font-style:normal;font-family:'Liberation Sans', sans-serif;">1</div><div class="t" style="left:1442.27px;top:401.15px;font-size:14px;line-height:14px;color:#333;font-weight:normal;font-style:normal;font-family:'Liberation Sans', sans-serif;">1374</div><div class="a" style="left:1498.8px;top:396px;width:18px;height:18px;border-radius:2px;border:2px solid #707070;background:#fff"></div><div class="a" style="left:1648.5px;top:396px;width:18px;height:18px;border-radius:2px;border:2px solid #707070;background:#fff"></div><div class="a" style="left:1852.5px;top:396px;width:18px;height:18px;border-radius:2px;border:2px solid #707070;background:#fff"></div><div class="t" style="left:292.99px;top:454.15px;font-size:14px;line-height:14px;color:#333;font-weight:normal;font-style:normal;font-family:'Liberation Sans', sans-serif;transform:scaleX(0.9925);transform-origin:0 0;">MR-0867</div><div class="t" style="left:392.66px;top:444.15px;font-size:14px;line-height:14px;color:#333;font-weight:normal;font-style:normal;font-family:'Liberation Sans', sans-serif;transform:scaleX(1.0168);transform-origin:0 0;">MOHAMM...</div><div class="t" style="left:393.20px;top:462.95px;font-size:14px;line-height:14px;color:#333;font-weight:normal;font-style:normal;font-family:'Liberation Sans', sans-serif;transform:scaleX(0.8960);transform-origin:0 0;">ARBAXZ</div><div class="t" style="left:487.36px;top:454.15px;font-size:14px;line-height:14px;color:#333;font-weight:normal;font-style:normal;font-family:'Liberation Sans', sans-serif;transform:scaleX(0.9269);transform-origin:0 0;">REGULARMON</div><div class="t" style="left:656.93px;top:454.15px;font-size:14px;line-height:14px;color:#333;font-weight:normal;font-style:normal;font-family:'Liberation Sans', sans-serif;transform:scaleX(0.9081);transform-origin:0 0;">SNACK</div><div class="t" style="left:725.43px;top:454.15px;font-size:14px;line-height:14px;color:#333;font-weight:normal;font-style:normal;font-family:'Liberation Sans', sans-serif;transform:scaleX(0.9566);transform-origin:0 0;">Danish Pastry</div><div class="t" style="left:978.39px;top:454.15px;font-size:14px;line-height:14px;color:#333;font-weight:normal;font-style:normal;font-family:'Liberation Sans', sans-serif;transform:scaleX(1.0547);transform-origin:0 0;">1/11/2026</div><div class="a" style="left:1100px;top:449px;width:18px;height:18px;border-radius:2px;border:2px solid #707070;background:#fff"></div><div class="a" style="left:1177.5px;top:449px;width:18px;height:18px;border-radius:2px;border:2px solid #707070;background:#fff"></div><div class="a" style="left:1266.8000000000002px;top:449px;width:18px;height:18px;border-radius:2px;background:#6f6f6f"></div><svg class="a" style="left:1266.8000000000002px;top:449px" width="18" height="18" viewBox="0 0 18 18"><path d="M4.3 9.2 L7.6 12.3 L13.6 6.2" stroke="#fff" stroke-width="2.1" fill="none"/></svg><div class="t" style="left:1386.76px;top:454.15px;font-size:14px;line-height:14px;color:#333;font-weight:normal;font-style:normal;font-family:'Liberation Sans', sans-serif;">1</div><div class="t" style="left:1442.27px;top:454.15px;font-size:14px;line-height:14px;color:#333;font-weight:normal;font-style:normal;font-family:'Liberation Sans', sans-serif;">1374</div><div class="a" style="left:1498.8px;top:449px;width:18px;height:18px;border-radius:2px;border:2px solid #707070;background:#fff"></div><div class="a" style="left:1648.5px;top:449px;width:18px;height:18px;border-radius:2px;border:2px solid #707070;background:#fff"></div><div class="a" style="left:1852.5px;top:449px;width:18px;height:18px;border-radius:2px;border:2px solid #707070;background:#fff"></div><div class="t" style="left:292.99px;top:507.15px;font-size:14px;line-height:14px;color:#333;font-weight:normal;font-style:normal;font-family:'Liberation Sans', sans-serif;transform:scaleX(0.9925);transform-origin:0 0;">MR-0867</div><div class="t" style="left:392.66px;top:497.15px;font-size:14px;line-height:14px;color:#333;font-weight:normal;font-style:normal;font-family:'Liberation Sans', sans-serif;transform:scaleX(1.0168);transform-origin:0 0;">MOHAMM...</div><div class="t" style="left:393.20px;top:515.95px;font-size:14px;line-height:14px;color:#333;font-weight:normal;font-style:normal;font-family:'Liberation Sans', sans-serif;transform:scaleX(0.8960);transform-origin:0 0;">ARBAXZ</div><div class="t" style="left:487.36px;top:507.15px;font-size:14px;line-height:14px;color:#333;font-weight:normal;font-style:normal;font-family:'Liberation Sans', sans-serif;transform:scaleX(0.9269);transform-origin:0 0;">REGULARMON</div><div class="t" style="left:656.45px;top:507.15px;font-size:14px;line-height:14px;color:#333;font-weight:normal;font-style:normal;font-family:'Liberation Sans', sans-serif;transform:scaleX(0.9372);transform-origin:0 0;">LUNCH</div><div class="t" style="left:725.39px;top:507.15px;font-size:14px;line-height:14px;color:#333;font-weight:normal;font-style:normal;font-family:'Liberation Sans', sans-serif;transform:scaleX(0.9867);transform-origin:0 0;">Laban</div><div class="t" style="left:978.39px;top:507.15px;font-size:14px;line-height:14px;color:#333;font-weight:normal;font-style:normal;font-family:'Liberation Sans', sans-serif;transform:scaleX(1.0547);transform-origin:0 0;">1/11/2026</div><div class="a" style="left:1100px;top:502px;width:18px;height:18px;border-radius:2px;border:2px solid #707070;background:#fff"></div><div class="a" style="left:1177.5px;top:502px;width:18px;height:18px;border-radius:2px;border:2px solid #707070;background:#fff"></div><div class="a" style="left:1266.8000000000002px;top:502px;width:18px;height:18px;border-radius:2px;background:#6f6f6f"></div><svg class="a" style="left:1266.8000000000002px;top:502px" width="18" height="18" viewBox="0 0 18 18"><path d="M4.3 9.2 L7.6 12.3 L13.6 6.2" stroke="#fff" stroke-width="2.1" fill="none"/></svg><div class="t" style="left:1386.76px;top:507.15px;font-size:14px;line-height:14px;color:#333;font-weight:normal;font-style:normal;font-family:'Liberation Sans', sans-serif;">1</div><div class="t" style="left:1442.27px;top:507.15px;font-size:14px;line-height:14px;color:#333;font-weight:normal;font-style:normal;font-family:'Liberation Sans', sans-serif;">1374</div><div class="a" style="left:1498.8px;top:502px;width:18px;height:18px;border-radius:2px;border:2px solid #707070;background:#fff"></div><div class="a" style="left:1648.5px;top:502px;width:18px;height:18px;border-radius:2px;border:2px solid #707070;background:#fff"></div><div class="a" style="left:1852.5px;top:502px;width:18px;height:18px;border-radius:2px;border:2px solid #707070;background:#fff"></div><div class="t" style="left:292.99px;top:560.15px;font-size:14px;line-height:14px;color:#333;font-weight:normal;font-style:normal;font-family:'Liberation Sans', sans-serif;transform:scaleX(0.9925);transform-origin:0 0;">MR-0867</div><div class="t" style="left:392.66px;top:550.15px;font-size:14px;line-height:14px;color:#333;font-weight:normal;font-style:normal;font-family:'Liberation Sans', sans-serif;transform:scaleX(1.0168);transform-origin:0 0;">MOHAMM...</div><div class="t" style="left:393.20px;top:568.95px;font-size:14px;line-height:14px;color:#333;font-weight:normal;font-style:normal;font-family:'Liberation Sans', sans-serif;transform:scaleX(0.8960);transform-origin:0 0;">ARBAXZ</div><div class="t" style="left:487.36px;top:560.15px;font-size:14px;line-height:14px;color:#333;font-weight:normal;font-style:normal;font-family:'Liberation Sans', sans-serif;transform:scaleX(0.9269);transform-origin:0 0;">REGULARMON</div><div class="t" style="left:656.45px;top:560.15px;font-size:14px;line-height:14px;color:#333;font-weight:normal;font-style:normal;font-family:'Liberation Sans', sans-serif;transform:scaleX(0.9372);transform-origin:0 0;">LUNCH</div><div class="t" style="left:726.31px;top:560.15px;font-size:14px;line-height:14px;color:#333;font-weight:normal;font-style:normal;font-family:'Liberation Sans', sans-serif;transform:scaleX(0.9262);transform-origin:0 0;">Juice</div><div class="t" style="left:978.39px;top:560.15px;font-size:14px;line-height:14px;color:#333;font-weight:normal;font-style:normal;font-family:'Liberation Sans', sans-serif;transform:scaleX(1.0547);transform-origin:0 0;">1/11/2026</div><div class="a" style="left:1100px;top:555px;width:18px;height:18px;border-radius:2px;border:2px solid #707070;background:#fff"></div><div class="a" style="left:1177.5px;top:555px;width:18px;height:18px;border-radius:2px;border:2px solid #707070;background:#fff"></div><div class="a" style="left:1266.8000000000002px;top:555px;width:18px;height:18px;border-radius:2px;background:#6f6f6f"></div><svg class="a" style="left:1266.8000000000002px;top:555px" width="18" height="18" viewBox="0 0 18 18"><path d="M4.3 9.2 L7.6 12.3 L13.6 6.2" stroke="#fff" stroke-width="2.1" fill="none"/></svg><div class="t" style="left:1386.76px;top:560.15px;font-size:14px;line-height:14px;color:#333;font-weight:normal;font-style:normal;font-family:'Liberation Sans', sans-serif;">1</div><div class="t" style="left:1442.27px;top:560.15px;font-size:14px;line-height:14px;color:#333;font-weight:normal;font-style:normal;font-family:'Liberation Sans', sans-serif;">1374</div><div class="a" style="left:1498.8px;top:555px;width:18px;height:18px;border-radius:2px;border:2px solid #707070;background:#fff"></div><div class="a" style="left:1648.5px;top:555px;width:18px;height:18px;border-radius:2px;border:2px solid #707070;background:#fff"></div><div class="a" style="left:1852.5px;top:555px;width:18px;height:18px;border-radius:2px;border:2px solid #707070;background:#fff"></div><div class="t" style="left:292.99px;top:613.15px;font-size:14px;line-height:14px;color:#333;font-weight:normal;font-style:normal;font-family:'Liberation Sans', sans-serif;transform:scaleX(0.9925);transform-origin:0 0;">MR-0867</div><div class="t" style="left:392.66px;top:603.15px;font-size:14px;line-height:14px;color:#333;font-weight:normal;font-style:normal;font-family:'Liberation Sans', sans-serif;transform:scaleX(1.0168);transform-origin:0 0;">MOHAMM...</div><div class="t" style="left:393.20px;top:621.95px;font-size:14px;line-height:14px;color:#333;font-weight:normal;font-style:normal;font-family:'Liberation Sans', sans-serif;transform:scaleX(0.8960);transform-origin:0 0;">ARBAXZ</div><div class="t" style="left:487.36px;top:613.15px;font-size:14px;line-height:14px;color:#333;font-weight:normal;font-style:normal;font-family:'Liberation Sans', sans-serif;transform:scaleX(0.9269);transform-origin:0 0;">REGULARMON</div><div class="t" style="left:656.45px;top:613.15px;font-size:14px;line-height:14px;color:#333;font-weight:normal;font-style:normal;font-family:'Liberation Sans', sans-serif;transform:scaleX(0.9372);transform-origin:0 0;">LUNCH</div><div class="t" style="left:726.43px;top:613.15px;font-size:14px;line-height:14px;color:#333;font-weight:normal;font-style:normal;font-family:'Liberation Sans', sans-serif;transform:scaleX(0.9926);transform-origin:0 0;">Water</div><div class="t" style="left:978.39px;top:613.15px;font-size:14px;line-height:14px;color:#333;font-weight:normal;font-style:normal;font-family:'Liberation Sans', sans-serif;transform:scaleX(1.0547);transform-origin:0 0;">1/11/2026</div><div class="a" style="left:1100px;top:608px;width:18px;height:18px;border-radius:2px;border:2px solid #707070;background:#fff"></div><div class="a" style="left:1177.5px;top:608px;width:18px;height:18px;border-radius:2px;border:2px solid #707070;background:#fff"></div><div class="a" style="left:1266.8000000000002px;top:608px;width:18px;height:18px;border-radius:2px;background:#6f6f6f"></div><svg class="a" style="left:1266.8000000000002px;top:608px" width="18" height="18" viewBox="0 0 18 18"><path d="M4.3 9.2 L7.6 12.3 L13.6 6.2" stroke="#fff" stroke-width="2.1" fill="none"/></svg><div class="t" style="left:1386.76px;top:613.15px;font-size:14px;line-height:14px;color:#333;font-weight:normal;font-style:normal;font-family:'Liberation Sans', sans-serif;">1</div><div class="t" style="left:1442.27px;top:613.15px;font-size:14px;line-height:14px;color:#333;font-weight:normal;font-style:normal;font-family:'Liberation Sans', sans-serif;">1374</div><div class="a" style="left:1498.8px;top:608px;width:18px;height:18px;border-radius:2px;border:2px solid #707070;background:#fff"></div><div class="a" style="left:1648.5px;top:608px;width:18px;height:18px;border-radius:2px;border:2px solid #707070;background:#fff"></div><div class="a" style="left:1852.5px;top:608px;width:18px;height:18px;border-radius:2px;border:2px solid #707070;background:#fff"></div><div class="t" style="left:292.99px;top:666.15px;font-size:14px;line-height:14px;color:#333;font-weight:normal;font-style:normal;font-family:'Liberation Sans', sans-serif;transform:scaleX(0.9925);transform-origin:0 0;">MR-0867</div><div class="t" style="left:392.66px;top:656.15px;font-size:14px;line-height:14px;color:#333;font-weight:normal;font-style:normal;font-family:'Liberation Sans', sans-serif;transform:scaleX(1.0168);transform-origin:0 0;">MOHAMM...</div><div class="t" style="left:393.20px;top:674.95px;font-size:14px;line-height:14px;color:#333;font-weight:normal;font-style:normal;font-family:'Liberation Sans', sans-serif;transform:scaleX(0.8960);transform-origin:0 0;">ARBAXZ</div><div class="t" style="left:487.36px;top:666.15px;font-size:14px;line-height:14px;color:#333;font-weight:normal;font-style:normal;font-family:'Liberation Sans', sans-serif;transform:scaleX(0.9269);transform-origin:0 0;">REGULARMON</div><div class="t" style="left:656.45px;top:666.15px;font-size:14px;line-height:14px;color:#333;font-weight:normal;font-style:normal;font-family:'Liberation Sans', sans-serif;transform:scaleX(0.9372);transform-origin:0 0;">LUNCH</div><div class="t" style="left:725.39px;top:666.15px;font-size:14px;line-height:14px;color:#333;font-weight:normal;font-style:normal;font-family:'Liberation Sans', sans-serif;transform:scaleX(0.9905);transform-origin:0 0;">Dessert / Mix Fruits</div><div class="t" style="left:978.39px;top:666.15px;font-size:14px;line-height:14px;color:#333;font-weight:normal;font-style:normal;font-family:'Liberation Sans', sans-serif;transform:scaleX(1.0547);transform-origin:0 0;">1/11/2026</div><div class="a" style="left:1100px;top:661px;width:18px;height:18px;border-radius:2px;border:2px solid #707070;background:#fff"></div><div class="a" style="left:1177.5px;top:661px;width:18px;height:18px;border-radius:2px;border:2px solid #707070;background:#fff"></div><div class="a" style="left:1266.8000000000002px;top:661px;width:18px;height:18px;border-radius:2px;background:#6f6f6f"></div><svg class="a" style="left:1266.8000000000002px;top:661px" width="18" height="18" viewBox="0 0 18 18"><path d="M4.3 9.2 L7.6 12.3 L13.6 6.2" stroke="#fff" stroke-width="2.1" fill="none"/></svg><div class="t" style="left:1386.76px;top:666.15px;font-size:14px;line-height:14px;color:#333;font-weight:normal;font-style:normal;font-family:'Liberation Sans', sans-serif;">1</div><div class="t" style="left:1442.27px;top:666.15px;font-size:14px;line-height:14px;color:#333;font-weight:normal;font-style:normal;font-family:'Liberation Sans', sans-serif;">1374</div><div class="a" style="left:1498.8px;top:661px;width:18px;height:18px;border-radius:2px;border:2px solid #707070;background:#fff"></div><div class="a" style="left:1648.5px;top:661px;width:18px;height:18px;border-radius:2px;border:2px solid #707070;background:#fff"></div><div class="a" style="left:1852.5px;top:661px;width:18px;height:18px;border-radius:2px;border:2px solid #707070;background:#fff"></div><div class="t" style="left:292.99px;top:719.15px;font-size:14px;line-height:14px;color:#333;font-weight:normal;font-style:normal;font-family:'Liberation Sans', sans-serif;transform:scaleX(0.9925);transform-origin:0 0;">MR-0867</div><div class="t" style="left:392.66px;top:709.15px;font-size:14px;line-height:14px;color:#333;font-weight:normal;font-style:normal;font-family:'Liberation Sans', sans-serif;transform:scaleX(1.0168);transform-origin:0 0;">MOHAMM...</div><div class="t" style="left:393.20px;top:727.95px;font-size:14px;line-height:14px;color:#333;font-weight:normal;font-style:normal;font-family:'Liberation Sans', sans-serif;transform:scaleX(0.8960);transform-origin:0 0;">ARBAXZ</div><div class="t" style="left:487.36px;top:719.15px;font-size:14px;line-height:14px;color:#333;font-weight:normal;font-style:normal;font-family:'Liberation Sans', sans-serif;transform:scaleX(0.9269);transform-origin:0 0;">REGULARMON</div><div class="t" style="left:656.45px;top:719.15px;font-size:14px;line-height:14px;color:#333;font-weight:normal;font-style:normal;font-family:'Liberation Sans', sans-serif;transform:scaleX(0.9372);transform-origin:0 0;">LUNCH</div><div class="t" style="left:725.40px;top:719.15px;font-size:14px;line-height:14px;color:#333;font-weight:normal;font-style:normal;font-family:'Liberation Sans', sans-serif;transform:scaleX(0.9779);transform-origin:0 0;">Bread</div><div class="t" style="left:978.39px;top:719.15px;font-size:14px;line-height:14px;color:#333;font-weight:normal;font-style:normal;font-family:'Liberation Sans', sans-serif;transform:scaleX(1.0547);transform-origin:0 0;">1/11/2026</div><div class="a" style="left:1100px;top:714px;width:18px;height:18px;border-radius:2px;border:2px solid #707070;background:#fff"></div><div class="a" style="left:1177.5px;top:714px;width:18px;height:18px;border-radius:2px;border:2px solid #707070;background:#fff"></div><div class="a" style="left:1266.8000000000002px;top:714px;width:18px;height:18px;border-radius:2px;background:#6f6f6f"></div><svg class="a" style="left:1266.8000000000002px;top:714px" width="18" height="18" viewBox="0 0 18 18"><path d="M4.3 9.2 L7.6 12.3 L13.6 6.2" stroke="#fff" stroke-width="2.1" fill="none"/></svg><div class="t" style="left:1386.76px;top:719.15px;font-size:14px;line-height:14px;color:#333;font-weight:normal;font-style:normal;font-family:'Liberation Sans', sans-serif;">1</div><div class="t" style="left:1442.27px;top:719.15px;font-size:14px;line-height:14px;color:#333;font-weight:normal;font-style:normal;font-family:'Liberation Sans', sans-serif;">1374</div><div class="a" style="left:1498.8px;top:714px;width:18px;height:18px;border-radius:2px;border:2px solid #707070;background:#fff"></div><div class="a" style="left:1648.5px;top:714px;width:18px;height:18px;border-radius:2px;border:2px solid #707070;background:#fff"></div><div class="a" style="left:1852.5px;top:714px;width:18px;height:18px;border-radius:2px;border:2px solid #707070;background:#fff"></div><div class="t" style="left:292.99px;top:772.15px;font-size:14px;line-height:14px;color:#333;font-weight:normal;font-style:normal;font-family:'Liberation Sans', sans-serif;transform:scaleX(0.9925);transform-origin:0 0;">MR-0867</div><div class="t" style="left:392.66px;top:762.15px;font-size:14px;line-height:14px;color:#333;font-weight:normal;font-style:normal;font-family:'Liberation Sans', sans-serif;transform:scaleX(1.0168);transform-origin:0 0;">MOHAMM...</div><div class="t" style="left:393.20px;top:780.95px;font-size:14px;line-height:14px;color:#333;font-weight:normal;font-style:normal;font-family:'Liberation Sans', sans-serif;transform:scaleX(0.8960);transform-origin:0 0;">ARBAXZ</div><div class="t" style="left:487.36px;top:772.15px;font-size:14px;line-height:14px;color:#333;font-weight:normal;font-style:normal;font-family:'Liberation Sans', sans-serif;transform:scaleX(0.9269);transform-origin:0 0;">REGULARMON</div><div class="t" style="left:656.45px;top:772.15px;font-size:14px;line-height:14px;color:#333;font-weight:normal;font-style:normal;font-family:'Liberation Sans', sans-serif;transform:scaleX(0.9372);transform-origin:0 0;">LUNCH</div><div class="t" style="left:725.44px;top:772.15px;font-size:14px;line-height:14px;color:#333;font-weight:normal;font-style:normal;font-family:'Liberation Sans', sans-serif;transform:scaleX(0.9485);transform-origin:0 0;">Fish Kofta Grilled Concasse Sauce Rice</div><div class="t" style="left:978.39px;top:772.15px;font-size:14px;line-height:14px;color:#333;font-weight:normal;font-style:normal;font-family:'Liberation Sans', sans-serif;transform:scaleX(1.0547);transform-origin:0 0;">1/11/2026</div><div class="a" style="left:1100px;top:767px;width:18px;height:18px;border-radius:2px;border:2px solid #707070;background:#fff"></div><div class="a" style="left:1177.5px;top:767px;width:18px;height:18px;border-radius:2px;border:2px solid #707070;background:#fff"></div><div class="a" style="left:1266.8000000000002px;top:767px;width:18px;height:18px;border-radius:2px;background:#6f6f6f"></div><svg class="a" style="left:1266.8000000000002px;top:767px" width="18" height="18" viewBox="0 0 18 18"><path d="M4.3 9.2 L7.6 12.3 L13.6 6.2" stroke="#fff" stroke-width="2.1" fill="none"/></svg><div class="t" style="left:1386.76px;top:772.15px;font-size:14px;line-height:14px;color:#333;font-weight:normal;font-style:normal;font-family:'Liberation Sans', sans-serif;">1</div><div class="t" style="left:1442.27px;top:772.15px;font-size:14px;line-height:14px;color:#333;font-weight:normal;font-style:normal;font-family:'Liberation Sans', sans-serif;">1374</div><div class="a" style="left:1498.8px;top:767px;width:18px;height:18px;border-radius:2px;border:2px solid #707070;background:#fff"></div><div class="a" style="left:1648.5px;top:767px;width:18px;height:18px;border-radius:2px;border:2px solid #707070;background:#fff"></div><div class="a" style="left:1852.5px;top:767px;width:18px;height:18px;border-radius:2px;border:2px solid #707070;background:#fff"></div><div class="t" style="left:292.99px;top:825.15px;font-size:14px;line-height:14px;color:#333;font-weight:normal;font-style:normal;font-family:'Liberation Sans', sans-serif;transform:scaleX(0.9925);transform-origin:0 0;">MR-0867</div><div class="t" style="left:392.66px;top:815.15px;font-size:14px;line-height:14px;color:#333;font-weight:normal;font-style:normal;font-family:'Liberation Sans', sans-serif;transform:scaleX(1.0168);transform-origin:0 0;">MOHAMM...</div><div class="t" style="left:393.20px;top:833.95px;font-size:14px;line-height:14px;color:#333;font-weight:normal;font-style:normal;font-family:'Liberation Sans', sans-serif;transform:scaleX(0.8960);transform-origin:0 0;">ARBAXZ</div><div class="t" style="left:487.36px;top:825.15px;font-size:14px;line-height:14px;color:#333;font-weight:normal;font-style:normal;font-family:'Liberation Sans', sans-serif;transform:scaleX(0.9269);transform-origin:0 0;">REGULARMON</div><div class="t" style="left:656.45px;top:825.15px;font-size:14px;line-height:14px;color:#333;font-weight:normal;font-style:normal;font-family:'Liberation Sans', sans-serif;transform:scaleX(0.9372);transform-origin:0 0;">LUNCH</div><div class="t" style="left:725.81px;top:814.85px;font-size:14px;line-height:14px;color:#333;font-weight:normal;font-style:normal;font-family:'Liberation Sans', sans-serif;transform:scaleX(0.9804);transform-origin:0 0;">Chicken Shish Taouk Mixed Grilled</div><div class="t" style="left:725.44px;top:833.85px;font-size:14px;line-height:14px;color:#333;font-weight:normal;font-style:normal;font-family:'Liberation Sans', sans-serif;transform:scaleX(0.9459);transform-origin:0 0;">Peppers Rice</div><div class="t" style="left:978.39px;top:825.15px;font-size:14px;line-height:14px;color:#333;font-weight:normal;font-style:normal;font-family:'Liberation Sans', sans-serif;transform:scaleX(1.0547);transform-origin:0 0;">1/11/2026</div><div class="a" style="left:1100px;top:820px;width:18px;height:18px;border-radius:2px;border:2px solid #707070;background:#fff"></div><div class="a" style="left:1177.5px;top:820px;width:18px;height:18px;border-radius:2px;border:2px solid #707070;background:#fff"></div><div class="a" style="left:1266.8000000000002px;top:820px;width:18px;height:18px;border-radius:2px;background:#6f6f6f"></div><svg class="a" style="left:1266.8000000000002px;top:820px" width="18" height="18" viewBox="0 0 18 18"><path d="M4.3 9.2 L7.6 12.3 L13.6 6.2" stroke="#fff" stroke-width="2.1" fill="none"/></svg><div class="t" style="left:1386.76px;top:825.15px;font-size:14px;line-height:14px;color:#333;font-weight:normal;font-style:normal;font-family:'Liberation Sans', sans-serif;">1</div><div class="t" style="left:1442.27px;top:825.15px;font-size:14px;line-height:14px;color:#333;font-weight:normal;font-style:normal;font-family:'Liberation Sans', sans-serif;">1374</div><div class="a" style="left:1498.8px;top:820px;width:18px;height:18px;border-radius:2px;border:2px solid #707070;background:#fff"></div><div class="a" style="left:1648.5px;top:820px;width:18px;height:18px;border-radius:2px;border:2px solid #707070;background:#fff"></div><div class="a" style="left:1852.5px;top:820px;width:18px;height:18px;border-radius:2px;border:2px solid #707070;background:#fff"></div><div class="t" style="left:292.99px;top:878.15px;font-size:14px;line-height:14px;color:#333;font-weight:normal;font-style:normal;font-family:'Liberation Sans', sans-serif;transform:scaleX(0.9925);transform-origin:0 0;">MR-0867</div><div class="t" style="left:392.66px;top:868.15px;font-size:14px;line-height:14px;color:#333;font-weight:normal;font-style:normal;font-family:'Liberation Sans', sans-serif;transform:scaleX(1.0168);transform-origin:0 0;">MOHAMM...</div><div class="t" style="left:393.20px;top:886.95px;font-size:14px;line-height:14px;color:#333;font-weight:normal;font-style:normal;font-family:'Liberation Sans', sans-serif;transform:scaleX(0.8960);transform-origin:0 0;">ARBAXZ</div><div class="t" style="left:487.36px;top:878.15px;font-size:14px;line-height:14px;color:#333;font-weight:normal;font-style:normal;font-family:'Liberation Sans', sans-serif;transform:scaleX(0.9269);transform-origin:0 0;">REGULARMON</div><div class="t" style="left:656.45px;top:878.15px;font-size:14px;line-height:14px;color:#333;font-weight:normal;font-style:normal;font-family:'Liberation Sans', sans-serif;transform:scaleX(0.9372);transform-origin:0 0;">LUNCH</div><div class="t" style="left:726.29px;top:878.15px;font-size:14px;line-height:14px;color:#333;font-weight:normal;font-style:normal;font-family:'Liberation Sans', sans-serif;transform:scaleX(0.9843);transform-origin:0 0;">Jarjeer with Pomogranete</div><div class="t" style="left:978.39px;top:878.15px;font-size:14px;line-height:14px;color:#333;font-weight:normal;font-style:normal;font-family:'Liberation Sans', sans-serif;transform:scaleX(1.0547);transform-origin:0 0;">1/11/2026</div><div class="a" style="left:1100px;top:873px;width:18px;height:18px;border-radius:2px;border:2px solid #707070;background:#fff"></div><div class="a" style="left:1177.5px;top:873px;width:18px;height:18px;border-radius:2px;border:2px solid #707070;background:#fff"></div><div class="a" style="left:1266.8000000000002px;top:873px;width:18px;height:18px;border-radius:2px;background:#6f6f6f"></div><svg class="a" style="left:1266.8000000000002px;top:873px" width="18" height="18" viewBox="0 0 18 18"><path d="M4.3 9.2 L7.6 12.3 L13.6 6.2" stroke="#fff" stroke-width="2.1" fill="none"/></svg><div class="t" style="left:1386.76px;top:878.15px;font-size:14px;line-height:14px;color:#333;font-weight:normal;font-style:normal;font-family:'Liberation Sans', sans-serif;">1</div><div class="t" style="left:1442.27px;top:878.15px;font-size:14px;line-height:14px;color:#333;font-weight:normal;font-style:normal;font-family:'Liberation Sans', sans-serif;">1374</div><div class="a" style="left:1498.8px;top:873px;width:18px;height:18px;border-radius:2px;border:2px solid #707070;background:#fff"></div><div class="a" style="left:1648.5px;top:873px;width:18px;height:18px;border-radius:2px;border:2px solid #707070;background:#fff"></div><div class="a" style="left:1852.5px;top:873px;width:18px;height:18px;border-radius:2px;border:2px solid #707070;background:#fff"></div><div class="t" style="left:292.99px;top:931.15px;font-size:14px;line-height:14px;color:#333;font-weight:normal;font-style:normal;font-family:'Liberation Sans', sans-serif;transform:scaleX(0.9925);transform-origin:0 0;">MR-0867</div><div class="t" style="left:392.66px;top:921.15px;font-size:14px;line-height:14px;color:#333;font-weight:normal;font-style:normal;font-family:'Liberation Sans', sans-serif;transform:scaleX(1.0168);transform-origin:0 0;">MOHAMM...</div><div class="t" style="left:393.20px;top:939.95px;font-size:14px;line-height:14px;color:#333;font-weight:normal;font-style:normal;font-family:'Liberation Sans', sans-serif;transform:scaleX(0.8960);transform-origin:0 0;">ARBAXZ</div><div class="t" style="left:487.36px;top:931.15px;font-size:14px;line-height:14px;color:#333;font-weight:normal;font-style:normal;font-family:'Liberation Sans', sans-serif;transform:scaleX(0.9269);transform-origin:0 0;">REGULARMON</div><div class="t" style="left:656.45px;top:931.15px;font-size:14px;line-height:14px;color:#333;font-weight:normal;font-style:normal;font-family:'Liberation Sans', sans-serif;transform:scaleX(0.9372);transform-origin:0 0;">LUNCH</div><div class="t" style="left:725.83px;top:931.15px;font-size:14px;line-height:14px;color:#333;font-weight:normal;font-style:normal;font-family:'Liberation Sans', sans-serif;transform:scaleX(0.9545);transform-origin:0 0;">Green Salad</div><div class="t" style="left:978.39px;top:931.15px;font-size:14px;line-height:14px;color:#333;font-weight:normal;font-style:normal;font-family:'Liberation Sans', sans-serif;transform:scaleX(1.0547);transform-origin:0 0;">1/11/2026</div><div class="a" style="left:1100px;top:926px;width:18px;height:18px;border-radius:2px;border:2px solid #707070;background:#fff"></div><div class="a" style="left:1177.5px;top:926px;width:18px;height:18px;border-radius:2px;border:2px solid #707070;background:#fff"></div><div class="a" style="left:1266.8000000000002px;top:926px;width:18px;height:18px;border-radius:2px;background:#6f6f6f"></div><svg class="a" style="left:1266.8000000000002px;top:926px" width="18" height="18" viewBox="0 0 18 18"><path d="M4.3 9.2 L7.6 12.3 L13.6 6.2" stroke="#fff" stroke-width="2.1" fill="none"/></svg><div class="t" style="left:1386.76px;top:931.15px;font-size:14px;line-height:14px;color:#333;font-weight:normal;font-style:normal;font-family:'Liberation Sans', sans-serif;">1</div><div class="t" style="left:1442.27px;top:931.15px;font-size:14px;line-height:14px;color:#333;font-weight:normal;font-style:normal;font-family:'Liberation Sans', sans-serif;">1374</div><div class="a" style="left:1498.8px;top:926px;width:18px;height:18px;border-radius:2px;border:2px solid #707070;background:#fff"></div><div class="a" style="left:1648.5px;top:926px;width:18px;height:18px;border-radius:2px;border:2px solid #707070;background:#fff"></div><div class="a" style="left:1852.5px;top:926px;width:18px;height:18px;border-radius:2px;border:2px solid #707070;background:#fff"></div><div class="a" style="left:276px;top:963px;width:1620px;height:7px;background:#e8e8e8"></div><div class="a" style="left:276px;top:963px;width:1195px;height:7px;background:#a8a8a8"></div><svg class="a" style="left:280px;top:983px" width="10" height="14" viewBox="0 0 10 14"><path d="M7.5 1.5 L2.5 7 L7.5 12.5" stroke="#999" stroke-width="1.7" fill="none"/></svg><div class="t" style="left:291.44px;top:984.15px;font-size:14px;line-height:14px;color:#999;font-weight:normal;font-style:normal;font-family:'Liberation Sans', sans-serif;transform:scaleX(0.9463);transform-origin:0 0;">Prev</div><div class="a" style="left:326px;top:979px;width:1px;height:22px;background:#ddd"></div><div class="t" style="left:332.27px;top:984.15px;font-size:14px;line-height:14px;color:#222;font-weight:normal;font-style:normal;font-family:'Liberation Sans', sans-serif;transform:scaleX(1.0098);transform-origin:0 0;">Next</div><svg class="a" style="left:363px;top:983px" width="10" height="14" viewBox="0 0 10 14"><path d="M2.5 1.5 L7.5 7 L2.5 12.5" stroke="#222" stroke-width="1.7" fill="none"/></svg><div class="t" style="left:1724.27px;top:983.85px;font-size:14px;line-height:14px;color:#333;font-weight:normal;font-style:normal;font-family:'Liberation Sans', sans-serif;">Showing</div><div class="t" style="left:1780.86px;top:983.85px;font-size:14px;line-height:14px;color:#333;font-weight:bold;font-style:normal;font-family:'Liberation Sans', sans-serif;transform:scaleX(0.8774);transform-origin:0 0;">1-13</div><div class="t" style="left:1810.09px;top:983.85px;font-size:14px;line-height:14px;color:#333;font-weight:normal;font-style:normal;font-family:'Liberation Sans', sans-serif;transform:scaleX(1.0961);transform-origin:0 0;">of</div><div class="t" style="left:1826.25px;top:983.85px;font-size:14px;line-height:14px;color:#333;font-weight:bold;font-style:normal;font-family:'Liberation Sans', sans-serif;">37</div><div class="t" style="left:1844.87px;top:983.85px;font-size:14px;line-height:14px;color:#333;font-weight:normal;font-style:normal;font-family:'Liberation Sans', sans-serif;transform:scaleX(1.0262);transform-origin:0 0;">items</div><svg class="a" style="left:1880.5px;top:988px" width="9.0" height="5" viewBox="0 0 10 5" preserveAspectRatio="none"><path d="M0 0 H10 L5 5 Z" fill="#777"/></svg><div class="a" style="left:260px;top:1022px;width:1660px;height:1px;background:#dcdcdc"></div><div class="a" style="left:260px;top:1023px;width:1660px;height:9px;background:linear-gradient(#fff,#f2f2f2)"></div><div class="a" style="left:260px;top:1032px;width:1660px;height:1px;background:#d6d6d6"></div><div class="a" style="left:260px;top:1033px;width:1660px;height:47px;background:#f0f0f0"></div><svg class="a" style="left:1006px;top:1051px" width="10" height="14" viewBox="0 0 10 14"><path d="M7.5 1.5 L2.5 7 L7.5 12.5" stroke="#8a8a8a" stroke-width="1.7" fill="none"/></svg><div class="t" style="left:1017.33px;top:1051.12px;font-size:13.8px;line-height:13.8px;color:#8a8a8a;font-weight:normal;font-style:normal;font-family:'Liberation Sans', sans-serif;transform:scaleX(0.8828);transform-origin:0 0;">PREV</div><div class="t" style="left:1074.36px;top:1051.12px;font-size:13.8px;line-height:13.8px;color:#222;font-weight:normal;font-style:normal;font-family:'Liberation Sans', sans-serif;transform:scaleX(0.9422);transform-origin:0 0;">NEXT</div><svg class="a" style="left:1109px;top:1051px" width="10" height="14" viewBox="0 0 10 14"><path d="M2.5 1.5 L7.5 7 L2.5 12.5" stroke="#222" stroke-width="1.8" fill="none"/></svg><div class="t" style="left:1141.96px;top:1051.12px;font-size:13.8px;line-height:13.8px;color:#222;font-weight:normal;font-style:normal;font-family:'Liberation Sans', sans-serif;transform:scaleX(0.9412);transform-origin:0 0;">EDIT</div><div class="a" style="left:1912px;top:57px;width:7px;height:947px;background:#ababab"></div>
</body></html>
